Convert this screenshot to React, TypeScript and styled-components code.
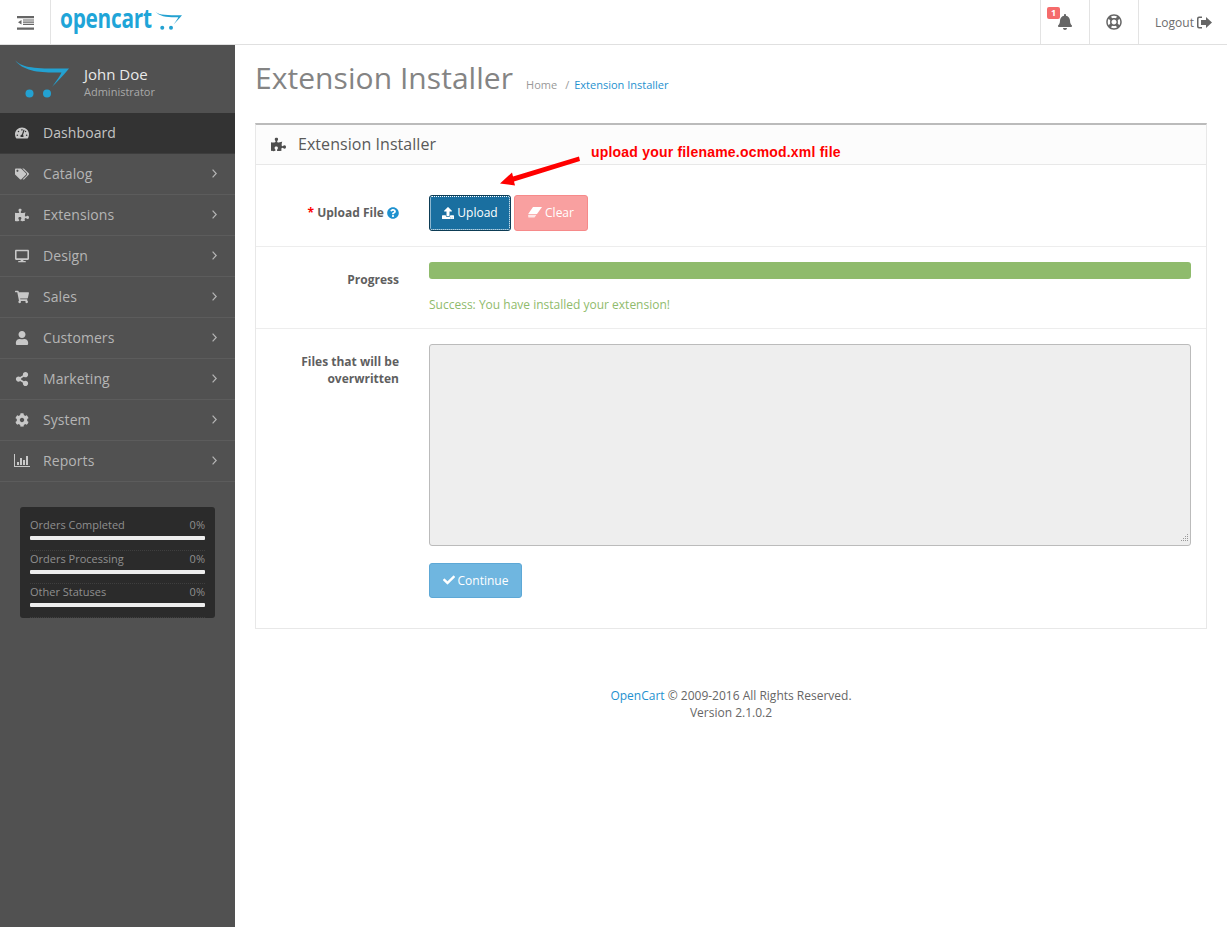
import React from "react";
import styled, { createGlobalStyle } from "styled-components";
import {
  FaBell, FaRegLifeRing, FaTachometerAlt, FaTags, FaPuzzlePiece, FaDesktop,
  FaShoppingCart, FaUser, FaShareAlt, FaCog, FaUpload, FaCheck, FaQuestionCircle,
} from "react-icons/fa";

const Global = createGlobalStyle`
  * { box-sizing: border-box; }
  html, body { margin: 0; padding: 0; background: #fff; }
  body { font-family: "Open Sans", sans-serif; font-size: 12px; color: #666; line-height: 17px; }
`;

const Shell = styled.div`display: flex; flex-direction: column; min-height: 927px; position: relative; overflow: hidden;`;
const Header = styled.header`display: flex; align-items: stretch; height: 45px; border-bottom: 1px solid #e0e0e0; background: #fff;`;
const Toggle = styled.div`width: 51px; border-right: 1px solid #e3e3e3; display: flex; align-items: center; justify-content: center; padding-top: 1px;`;
const Brand = styled.div`display: flex; align-items: flex-start; padding: 0 0 0 9px; flex: 1; gap: 4px;`;
const BrandName = styled.span`
  display: inline-block; width: 91px; color: #1fa5d8; font: 700 26px/36px "Open Sans", sans-serif;
  letter-spacing: -0.3px; transform: scaleX(0.8); transform-origin: left center; white-space: nowrap;
`;
const BrandCart = styled.span`display: flex; margin-top: 11px;`;
const NavCell = styled.div<{ $w: number }>`width: ${(p) => p.$w}px; border-left: 1px solid #e3e3e3; display: flex; align-items: center; justify-content: center; color: #666; font-size: 16px; position: relative; gap: 3px;`;
const LogoutCell = styled(NavCell)`padding-left: 1px;`;
const Badge = styled.span`position: absolute; left: 6px; top: 7px; width: 13px; height: 12px; background: #f56b6b; color: #fff; font-size: 9px; font-weight: 700; line-height: 12px; text-align: center; border-radius: 2px;`;
const LogoutLabel = styled.span`font-size: 12px; color: #6d6d6d;`;

const Body = styled.div`display: flex; flex: 1;`;
const Side = styled.aside`width: 235px; background: #515151; flex: none;`;
const Profile = styled.div`height: 68px; display: flex; align-items: center; padding: 0 0 0 15px; gap: 15px;`;
const ProfileText = styled.div`padding-top: 7px;`;
const UserName = styled.div`font-size: 15px; line-height: 17px; color: #e9e9e9;`;
const UserRole = styled.div`font-size: 11px; line-height: 16px; margin-top: 1px; color: #a9a9a9;`;
const Menu = styled.nav`display: flex; flex-direction: column;`;
const MenuRow = styled.div<{ $active?: boolean }>`
  height: 41px;
  background: ${(p) => (p.$active ? "#333" : "transparent")};
  border-bottom: 1px solid ${(p) => (p.$active ? "#3d3d3d" : "#5c5c5c")};
  color: ${(p) => (p.$active ? "#c4c4c4" : "#b5b5b5")};
  display: flex; align-items: center; font-size: 14px; letter-spacing: 0.08px; padding: 0 18px 1px 14px;
`;
const MenuIcon = styled.span`width: 16px; margin-right: 13px; display: flex; align-items: center; justify-content: center; font-size: 14px; flex: none; color: #c8c8c8;`;
const MenuLabel = styled.span`flex: 1;`;
const Stats = styled.div`margin: 25px 20px 0; background: #2b2b2b; border-radius: 3px; padding: 10px 10px 0; height: 111px;`;
const Stat = styled.div`height: 33.6px; border-bottom: 1px dotted #3f3f3f;`;
const StatHead = styled.div`display: flex; justify-content: space-between; font-size: 11px; line-height: 15px; color: #8f8f8f;`;
const StatBar = styled.div`height: 4px; margin-top: 4px; background: #eee; border-radius: 1px;`;

const Main = styled.main`flex: 1; padding: 0 20px; min-width: 0;`;
const PageHead = styled.div`height: 78px; display: flex; align-items: baseline; padding-top: 11px;`;
const Title = styled.h1`margin: 0; font-size: 30px; font-weight: 400; line-height: 44px; color: #848484; letter-spacing: 0.05px;`;
const Crumbs = styled.div`margin-left: 13px; font-size: 11px; display: flex; color: #999;`;
const CrumbSep = styled.span`margin: 0 5px 0 8px;`;
const CrumbLink = styled.span`color: #1e91cf;`;

const Panel = styled.section`border: 1px solid #e8e8e8; border-top: 2px solid #bbb; height: 506px; position: relative;`;
const PanelHead = styled.div`height: 40px; background: #fcfcfc; border-bottom: 1px solid #e8e8e8; display: flex; align-items: center; padding-left: 15px; gap: 12px; font-size: 16px; letter-spacing: 0.05px; color: #595959;`;
const PanelIcon = styled.span`display: flex; font-size: 15px; color: #4f4f4f;`;
const Row = styled.div<{ $h: number; $pad: number; $last?: boolean }>`
  height: ${(p) => p.$h}px;
  border-bottom: ${(p) => (p.$last ? "0" : "1px solid #ededed")};
  display: grid; grid-template-columns: 143px 1fr; column-gap: 30px; padding: ${(p) => p.$pad}px 15px 0 0;
`;
const Label = styled.label`text-align: right; font-weight: 700; font-size: 12px; color: #5f5f5f; line-height: 17px; padding-top: 9px;`;
const Req = styled.span`color: #f00;`;
const Help = styled.span`display: inline-flex; color: #1e91cf; font-size: 12px; vertical-align: -2px;`;
const Buttons = styled.div`display: flex; gap: 3px;`;
const Btn = styled.button<{ $bg: string; $bd: string; $w: number; $focus?: boolean }>`
  width: ${(p) => p.$w}px; height: 36px; background: ${(p) => p.$bg}; border: 1px solid ${(p) => p.$bd};
  border-radius: 3px; color: #fff; font: 12px "Open Sans", sans-serif; display: flex; align-items: center;
  justify-content: center; gap: 3px; padding: 0 0 1px; opacity: 1;
  ${(p) => (p.$focus ? "outline: 1px dotted #fff; outline-offset: -2px; border-color: #0d3c55;" : "")}
`;
const BtnIcon = styled.span`display: flex; font-size: 12px;`;
const Progress = styled.div`height: 17px; background: #8fbb6c; border-radius: 3px;`;
const Success = styled.div`margin-top: 17px; color: #8fbb6c; line-height: 17px;`;
const Area = styled.div`height: 202px; background: #eee; border: 1px solid #bbb; border-radius: 3px; position: relative;`;
const Grip = styled.svg`position: absolute; right: 0; bottom: 0;`;
const Continue = styled(Btn)`margin-top: 17px; height: 35px;`;

const Note = styled.span`position: absolute; left: 335px; top: 19px; font: 700 14px/17px "Liberation Sans", sans-serif; letter-spacing: 0.2px; color: #f00; white-space: nowrap;`;
const Arrow = styled.svg`position: absolute; left: 243px; top: 30px;`;

const Footer = styled.footer`margin-top: 58px; text-align: center; line-height: 17px; color: #666;`;

const Cart = ({ w, h }: { w: number; h: number }) => (
  <svg width={w} height={h} viewBox="0 0 54 38" fill="none">
    <path d="M0 0C6 8 22 9 54 8.5C48 16 41 23 37 27C42 20 45 16 46.5 12.5C28 13 8 12 0 0Z" fill="#23a1d1" />
    <circle cx="14.5" cy="33.5" r="4" fill="#23a1d1" />
    <circle cx="32" cy="33.5" r="4" fill="#23a1d1" />
  </svg>
);

const OutdentIcon = () => (
  <svg width="17" height="14" viewBox="0 0 17 14" fill="#666">
    <path d="M0 0H17V2.2H0ZM0 11.5H17V13.7H0ZM6 3.4H17V4.6H6ZM6 5.6H17V6.8H6ZM6 7.8H17V9H6ZM1 6.2L4.5 4V8.4Z" />
  </svg>
);

const SignOut = () => (
  <svg width="15" height="13" viewBox="0 0 15 13" fill="#666">
    <path d="M0 2.5A2 2 0 0 1 2 .5H5V2H2.4A.9.9 0 0 0 1.5 3V10A.9.9 0 0 0 2.4 11H5V12.5H2A2 2 0 0 1 0 10.5Z" />
    <path d="M9 1L15 6.5L9 12V9H4V4H9Z" />
  </svg>
);

const BarChart = () => (
  <svg width="16" height="13" viewBox="0 0 16 13" fill="#c8c8c8">
    <path d="M0 0H1V12H16V13H0Z" />
    <path d="M3 8H5V11H3ZM6 4H8V11H6ZM9 6H11V11H9ZM12 2H14V11H12Z" />
  </svg>
);

const Chevron = () => (
  <svg width="5" height="9" viewBox="0 0 5 9" fill="none" stroke="#b5b5b5" strokeWidth="1.2">
    <path d="M.6 .6L4.2 4.5L.6 8.4" />
  </svg>
);

const EraserIcon = () => (
  <svg width="14" height="11" viewBox="0 0 14 11" fill="#fff">
    <path d="M5 0H14L9 7H0.2Z" />
    <path d="M0.4 7.8H8.5L6.5 10.5H0.4L0 8.5Z" opacity="0.75" />
  </svg>
);

const items: [string, React.ReactNode][] = [
  ["Catalog", <FaTags />],
  ["Extensions", <FaPuzzlePiece />],
  ["Design", <FaDesktop />],
  ["Sales", <FaShoppingCart />],
  ["Customers", <FaUser />],
  ["Marketing", <FaShareAlt />],
  ["System", <FaCog />],
  ["Reports", <BarChart />],
];

const stats = ["Orders Completed", "Orders Processing", "Other Statuses"];

export default function App() {
  return (
    <Shell>
      <Global />
      <Header>
        <Toggle><OutdentIcon /></Toggle>
        <Brand>
          <BrandName>opencart</BrandName>
          <BrandCart><Cart w={27} h={19} /></BrandCart>
        </Brand>
        <NavCell $w={49}><Badge>1</Badge><FaBell /></NavCell>
        <NavCell $w={49}><FaRegLifeRing /></NavCell>
        <LogoutCell $w={89}><LogoutLabel>Logout</LogoutLabel><SignOut /></LogoutCell>
      </Header>
      <Body>
        <Side>
          <Profile>
            <Cart w={54} h={38} />
            <ProfileText>
              <UserName>John Doe</UserName>
              <UserRole>Administrator</UserRole>
            </ProfileText>
          </Profile>
          <Menu>
            <MenuRow $active>
              <MenuIcon><FaTachometerAlt /></MenuIcon>
              <MenuLabel>Dashboard</MenuLabel>
            </MenuRow>
            {items.map(([name, icon]) => (
              <MenuRow key={name}>
                <MenuIcon>{icon}</MenuIcon>
                <MenuLabel>{name}</MenuLabel>
                <Chevron />
              </MenuRow>
            ))}
          </Menu>
          <Stats>
            {stats.map((s) => (
              <Stat key={s}>
                <StatHead><span>{s}</span><span>0%</span></StatHead>
                <StatBar />
              </Stat>
            ))}
          </Stats>
        </Side>
        <Main>
          <PageHead>
            <Title>Extension Installer</Title>
            <Crumbs><span>Home</span><CrumbSep>/</CrumbSep><CrumbLink>Extension Installer</CrumbLink></Crumbs>
          </PageHead>
          <Panel>
            <PanelHead>
              <PanelIcon><FaPuzzlePiece /></PanelIcon>
              Extension Installer
            </PanelHead>
            <Row $h={82} $pad={30}>
              <Label><Req>*</Req> Upload File <Help><FaQuestionCircle /></Help></Label>
              <Buttons>
                <Btn $bg="#1a6fa0" $bd="#0d3c55" $w={82} $focus><BtnIcon><FaUpload /></BtnIcon>Upload</Btn>
                <Btn $bg="#f9a0a0" $bd="#f68a8a" $w={74}><BtnIcon><EraserIcon /></BtnIcon> Clear</Btn>
              </Buttons>
            </Row>
            <Row $h={82} $pad={15}>
              <Label>Progress</Label>
              <div>
                <Progress />
                <Success>Success: You have installed your extension!</Success>
              </div>
            </Row>
            <Row $h={298} $pad={15} $last>
              <Label>Files that will be overwritten</Label>
              <div>
                <Area>
                  <Grip width="12" height="12" viewBox="0 0 12 12" fill="#999">
                    <path d="M9 1h1v1H9zM7 3h1v1H7zM9 3h1v1H9zM5 5h1v1H5zM7 5h1v1H7zM9 5h1v1H9zM3 7h1v1H3zM5 7h1v1H5zM7 7h1v1H7zM9 7h1v1H9z" />
                  </Grip>
                </Area>
                <Continue $bg="#6fb6e0" $bd="#5da8d6" $w={93}><BtnIcon><FaCheck /></BtnIcon> Continue</Continue>
              </div>
            </Row>
            <Note>upload your filename.ocmod.xml file</Note>
            <Arrow width="84" height="34" viewBox="0 0 84 34" fill="#f00">
              <path d="M1 28.5L13 17.5L14 21.5L80 1.5L81 6L15 26.5L16 30.5Z" />
            </Arrow>
          </Panel>
          <Footer>
            <CrumbLink>OpenCart</CrumbLink> © 2009-2016 All Rights Reserved.<br />Version 2.1.0.2
          </Footer>
        </Main>
      </Body>
    </Shell>
  );
}
